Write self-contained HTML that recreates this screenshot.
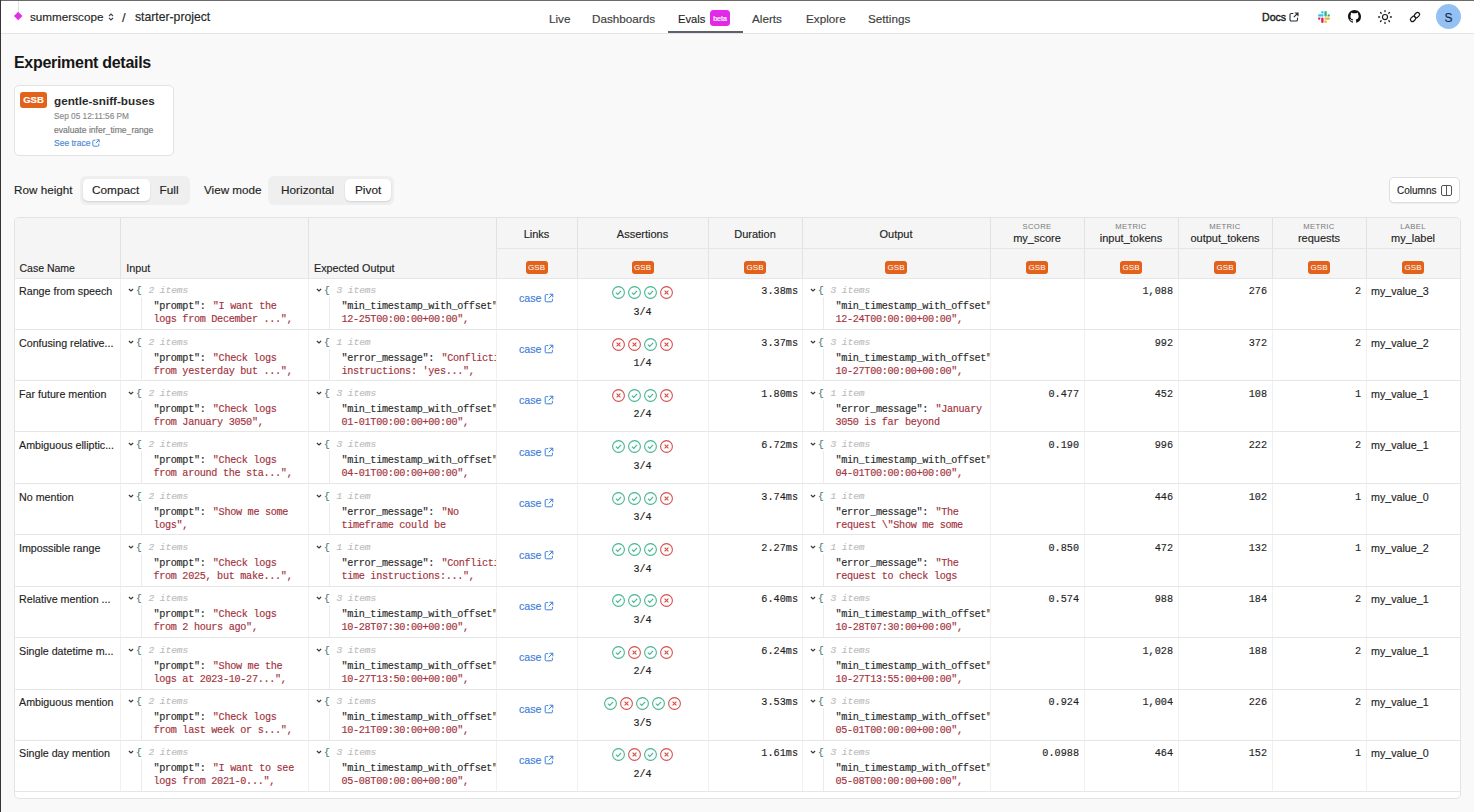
<!DOCTYPE html>
<html><head><meta charset="utf-8"><style>
*{box-sizing:border-box;margin:0;padding:0}
html,body{width:1474px;height:812px;overflow:hidden}
body{background:#f9f9f9;font-family:"Liberation Sans",sans-serif;color:#1f1f1f;position:relative;-webkit-text-stroke:0.15px currentColor}
div{position:absolute}
svg{display:block}
.frameT{left:0;top:0;width:1474px;height:1px;background:#6a6a6a}
.frameL{left:0;top:0;width:1px;height:812px;background:#363636}
.hdr{left:1px;top:1px;width:1473px;height:33px;background:#fff;border-bottom:1px solid #e4e4e4}
.t{white-space:nowrap;line-height:1}
.nav{font-size:11.7px;color:#3d3d3d;top:13px}
.card{left:14px;top:85px;width:160px;height:71px;background:#fff;border:1px solid #e2e2e2;border-radius:5px}
.seg{background:#efefef;border-radius:6px;height:29px;top:176px}
.segb{background:#fff;border-radius:5px;height:22px;top:3px;box-shadow:0 1px 2px rgba(0,0,0,.12)}
.segt{font-size:11.8px;color:#222;top:8.8px;white-space:nowrap;line-height:1}
.tbl{left:14px;top:217px;width:1447px;height:582px;background:#fff;border:1px solid #e3e3e3;border-radius:5px;overflow:hidden}
.thead{left:15px;top:218px;width:1445px;height:60px;background:#f5f5f5;border-radius:4px 4px 0 0}
.vl{width:1px;background:#ececec}
.hl{height:1px;background:#e6e6e6}
.th{font-size:11px;color:#1f1f1f;white-space:nowrap;line-height:1}
.th.c{text-align:center}
.tl{font-size:7.7px;color:#7a7a7a;-webkit-text-stroke:0;text-align:center;letter-spacing:.3px;line-height:1}
.gsb{width:22px;height:12.5px;background:#e2621b;border-radius:3px;color:#fff;font-size:8px;line-height:13.5px;text-align:center;letter-spacing:.1px;-webkit-text-stroke:0}
.td{font-size:10.7px;color:#1f1f1f;white-space:nowrap;line-height:1}
.jc{overflow:hidden;font-family:"Liberation Mono",monospace;font-size:10.2px;letter-spacing:-.32px;line-height:1}
.chev{left:8px;top:10.3px}
.brace{left:16px;top:8px;color:#4a7575;font-size:9.6px;letter-spacing:0}
.cnt{left:28.5px;top:8px;color:#bdbdbd;font-style:italic;font-size:9.6px;letter-spacing:-.1px;white-space:nowrap}
.guide{left:20.5px;top:19px;width:1px;height:32px;background:#ebebeb}
.ln{left:33.4px;white-space:pre;color:#2b2b2b}
.l1{top:24px}
.l2{top:37.3px}
.k{color:#2b2b2b}
.k+.v{margin-left:1.5px}
.v{color:#a3323c}
.lnk{font-size:10.6px;color:#3b7dd8;white-space:nowrap;line-height:1;display:flex;align-items:center;gap:3px}
.asrt{display:flex;justify-content:center;gap:3px}
.asrt svg{display:block}
.frac{text-align:center;font-family:"Liberation Mono",monospace;font-size:10px;color:#222;line-height:1}
.num{text-align:right;font-family:"Liberation Mono",monospace;font-size:10.2px;color:#1f1f1f;line-height:1}
</style></head><body>
<div class="hdr"></div>
<div class="frameT"></div><div class="frameL"></div>
<div style="left:18px;top:1px;width:1px;height:11px;background:#e3e3e3"></div>
<div style="left:15.2px;top:12.8px;width:6.4px;height:6.4px;background:#e22fe6;transform:rotate(45deg)"></div>
<div class="t" style="left:30px;top:11px;font-size:11.7px;color:#262626">summerscope</div>
<div style="left:108px;top:13px"><svg width="6" height="8" viewBox="0 0 6 8"><path d="M1 3 L3 1 L5 3 M1 5 L3 7 L5 5" fill="none" stroke="#444" stroke-width="1.1"/></svg></div>
<div class="t" style="left:122px;top:10.5px;font-size:13px;color:#262626">/</div>
<div class="t" style="left:135px;top:11px;font-size:12.2px;color:#262626">starter-project</div>

<div class="t nav" style="left:549px">Live</div>
<div class="t nav" style="left:592px">Dashboards</div>
<div class="t nav" style="left:678px;color:#1f1f1f;font-size:11.2px;top:13.5px">Evals</div>
<div style="left:710px;top:10px;width:20px;height:16px;background:#e229e8;border-radius:3.5px;color:#fff;font-size:7px;line-height:17.5px;text-align:center;-webkit-text-stroke:.2px #fff">beta</div>
<div style="left:668px;top:31px;width:75px;height:2px;background:#5d616d"></div>
<div class="t nav" style="left:752px">Alerts</div>
<div class="t nav" style="left:806px">Explore</div>
<div class="t nav" style="left:868px">Settings</div>

<div class="t" style="left:1262px;top:12.3px;font-size:10.6px;color:#222;-webkit-text-stroke:.4px #222">Docs</div>
<div style="left:1289px;top:12px"><svg width="10" height="10" viewBox="0 0 10 10"><path d="M4.3 1.5 H2.3 Q1 1.5 1 2.8 V7.7 Q1 9 2.3 9 H7.2 Q8.5 9 8.5 7.7 V5.7" fill="none" stroke="#2a2a2a" stroke-width="1.1"/><path d="M5.8 1 H9 V4.2 M9 1 L4.8 5.2" fill="none" stroke="#2a2a2a" stroke-width="1.1"/></svg></div>
<div style="left:1318px;top:11px"><svg width="12" height="12" viewBox="0 0 54 54">
<path fill="#36C5F0" d="M19.712.133a5.381 5.381 0 0 0-5.376 5.387 5.381 5.381 0 0 0 5.376 5.386h5.376V5.52A5.381 5.381 0 0 0 19.712.133m0 14.365H5.376A5.381 5.381 0 0 0 0 19.884a5.381 5.381 0 0 0 5.376 5.387h14.336a5.381 5.381 0 0 0 5.376-5.387 5.381 5.381 0 0 0-5.376-5.386"/>
<path fill="#2EB67D" d="M53.76 19.884a5.381 5.381 0 0 0-5.376-5.386 5.381 5.381 0 0 0-5.376 5.386v5.387h5.376a5.381 5.381 0 0 0 5.376-5.387m-14.336 0V5.52A5.381 5.381 0 0 0 34.048.133a5.381 5.381 0 0 0-5.376 5.387v14.364a5.381 5.381 0 0 0 5.376 5.387 5.381 5.381 0 0 0 5.376-5.387"/>
<path fill="#ECB22E" d="M34.048 54a5.381 5.381 0 0 0 5.376-5.387 5.381 5.381 0 0 0-5.376-5.386h-5.376v5.386A5.381 5.381 0 0 0 34.048 54m0-14.365h14.336a5.381 5.381 0 0 0 5.376-5.386 5.381 5.381 0 0 0-5.376-5.387H34.048a5.381 5.381 0 0 0-5.376 5.387 5.381 5.381 0 0 0 5.376 5.386"/>
<path fill="#E01E5A" d="M0 34.249a5.381 5.381 0 0 0 5.376 5.386 5.381 5.381 0 0 0 5.376-5.386v-5.387H5.376A5.381 5.381 0 0 0 0 34.25m14.336-.001v14.364A5.381 5.381 0 0 0 19.712 54a5.381 5.381 0 0 0 5.376-5.387V34.25a5.381 5.381 0 0 0-5.376-5.387 5.381 5.381 0 0 0-5.376 5.387"/>
</svg></div>
<div style="left:1348px;top:10px"><svg width="13" height="13" viewBox="0 0 16 16"><path fill="#111" d="M8 0C3.58 0 0 3.58 0 8c0 3.54 2.29 6.53 5.47 7.59.4.07.55-.17.55-.38 0-.19-.01-.82-.01-1.49-2.01.37-2.53-.49-2.69-.94-.09-.23-.48-.94-.82-1.13-.28-.15-.68-.52-.01-.53.63-.01 1.08.58 1.23.82.72 1.21 1.87.87 2.33.66.07-.52.28-.87.51-1.07-1.78-.2-3.64-.89-3.64-3.95 0-.87.31-1.59.82-2.15-.08-.2-.36-1.02.08-2.12 0 0 .67-.21 2.2.82.64-.18 1.32-.27 2-.27.68 0 1.36.09 2 .27 1.53-1.04 2.2-.82 2.2-.82.44 1.1.16 1.92.08 2.12.51.56.82 1.27.82 2.15 0 3.07-1.87 3.75-3.65 3.95.29.25.54.73.54 1.48 0 1.07-.01 1.93-.01 2.2 0 .21.15.46.55.38A8.013 8.013 0 0016 8c0-4.42-3.58-8-8-8z"/></svg></div>
<div style="left:1377px;top:8.8px"><svg width="16" height="16" viewBox="0 0 16 16"><circle cx="8" cy="8" r="2.55" fill="none" stroke="#1d1d1d" stroke-width="1.15"/><g stroke="#1d1d1d" stroke-width="1.3" stroke-linecap="round"><path d="M8 1.6V2.6M8 13.4V14.4M1.6 8H2.6M13.4 8H14.4M3.5 3.5L4.2 4.2M11.8 11.8L12.5 12.5M3.5 12.5L4.2 11.8M11.8 4.2L12.5 3.5"/></g></svg></div>
<div style="left:1408.3px;top:9.8px"><svg width="14" height="14" viewBox="0 0 14 14"><g fill="none" stroke="#1d1d1d" stroke-width="1.25"><rect x="-2.9" y="-2" width="5.8" height="4" rx="2" transform="translate(8.95 5.05) rotate(-45)"/><rect x="-2.9" y="-2" width="5.8" height="4" rx="2" transform="translate(5.05 8.95) rotate(-45)"/></g></svg></div>
<div style="left:1436px;top:4px;width:25px;height:25px;border-radius:50%;background:#93c1f3;color:#1b2b48;font-size:12px;line-height:28px;text-align:center">S</div>

<div class="t" style="left:14px;top:54.5px;font-size:16px;font-weight:bold;color:#161616;letter-spacing:-.3px;-webkit-text-stroke:0">Experiment details</div>

<div class="card">
 <div style="left:5px;top:6px;width:27px;height:16px;background:#e2621b;border-radius:3px;color:#fff;font-size:9.5px;font-weight:bold;line-height:16px;text-align:center">GSB</div>
 <div class="t" style="left:39px;top:9px;font-size:11.7px;font-weight:bold;color:#2a2a2a;-webkit-text-stroke:0">gentle-sniff-buses</div>
 <div class="t" style="left:39px;top:26px;font-size:8.3px;color:#8a8a8a">Sep 05 12:11:56 PM</div>
 <div class="t" style="left:39px;top:39.5px;font-size:8.6px;color:#777">evaluate infer_time_range</div>
 <div class="t" style="left:39px;top:53px;font-size:8.5px;color:#4a87d6;display:flex;gap:2px">See trace <svg width="8" height="8" viewBox="0 0 10 10"><path d="M4.3 1.5 H2.3 Q1 1.5 1 2.8 V7.7 Q1 9 2.3 9 H7.2 Q8.5 9 8.5 7.7 V5.7" fill="none" stroke="#4a87d6" stroke-width="1.2"/><path d="M5.8 1 H9 V4.2 M9 1 L4.8 5.2" fill="none" stroke="#4a87d6" stroke-width="1.2"/></svg></div>
</div>

<div class="t" style="left:14px;top:183.8px;font-size:11.7px;color:#1f1f1f">Row height</div>
<div class="seg" style="left:80px;width:110px">
 <div class="segb" style="left:3px;width:67px"></div>
 <div class="segt" style="left:12px">Compact</div>
 <div class="segt" style="left:79.5px">Full</div>
</div>
<div class="t" style="left:204px;top:183.8px;font-size:11.7px;color:#1f1f1f">View mode</div>
<div class="seg" style="left:268px;width:126px">
 <div class="segb" style="left:77px;width:46px"></div>
 <div class="segt" style="left:13px">Horizontal</div>
 <div class="segt" style="left:87px">Pivot</div>
</div>

<div style="left:1389px;top:177px;width:71px;height:26px;background:#fff;border:1px solid #dedede;border-radius:5px;box-shadow:0 1px 1px rgba(0,0,0,.05)">
 <div class="t" style="left:7px;top:8px;font-size:10px;color:#222">Columns</div>
 <div style="left:51px;top:7px;width:11px;height:11px;border:1px solid #555;border-radius:2px"><div style="left:4px;top:0;width:1px;height:9px;background:#555"></div></div>
</div>

<div class="tbl"></div>
<div class="thead"></div>
<div class="vl" style="left:120px;top:218px;height:60px;background:#e2e2e2"></div>
<div class="vl" style="left:120px;top:279px;height:512px;background:#f1f1f1"></div>
<div class="vl" style="left:308px;top:218px;height:60px;background:#e2e2e2"></div>
<div class="vl" style="left:308px;top:279px;height:512px;background:#f1f1f1"></div>
<div class="vl" style="left:496px;top:218px;height:60px;background:#e2e2e2"></div>
<div class="vl" style="left:496px;top:279px;height:512px;background:#f1f1f1"></div>
<div class="vl" style="left:577px;top:218px;height:60px;background:#e2e2e2"></div>
<div class="vl" style="left:577px;top:279px;height:512px;background:#f1f1f1"></div>
<div class="vl" style="left:708px;top:218px;height:60px;background:#e2e2e2"></div>
<div class="vl" style="left:708px;top:279px;height:512px;background:#f1f1f1"></div>
<div class="vl" style="left:802px;top:218px;height:60px;background:#e2e2e2"></div>
<div class="vl" style="left:802px;top:279px;height:512px;background:#f1f1f1"></div>
<div class="vl" style="left:990px;top:218px;height:60px;background:#e2e2e2"></div>
<div class="vl" style="left:990px;top:279px;height:512px;background:#f1f1f1"></div>
<div class="vl" style="left:1084px;top:218px;height:60px;background:#e2e2e2"></div>
<div class="vl" style="left:1084px;top:279px;height:512px;background:#f1f1f1"></div>
<div class="vl" style="left:1178px;top:218px;height:60px;background:#e2e2e2"></div>
<div class="vl" style="left:1178px;top:279px;height:512px;background:#f1f1f1"></div>
<div class="vl" style="left:1272px;top:218px;height:60px;background:#e2e2e2"></div>
<div class="vl" style="left:1272px;top:279px;height:512px;background:#f1f1f1"></div>
<div class="vl" style="left:1366px;top:218px;height:60px;background:#e2e2e2"></div>
<div class="vl" style="left:1366px;top:279px;height:512px;background:#f1f1f1"></div>
<div class="hl" style="left:496px;top:248px;width:964px"></div>
<div class="hl" style="left:14px;top:278px;width:1447px"></div>
<div class="th" style="left:19.5px;top:263.3px;font-size:10.5px">Case Name</div>
<div class="th" style="left:126.2px;top:263.3px;font-size:10.8px">Input</div>
<div class="th" style="left:314px;top:263.3px;font-size:10.8px">Expected Output</div>
<div class="th c" style="left:496px;top:229px;width:81px">Links</div>
<div class="th c" style="left:577px;top:229px;width:131px">Assertions</div>
<div class="th c" style="left:708px;top:229px;width:94px">Duration</div>
<div class="th c" style="left:802px;top:229px;width:188px">Output</div>
<div class="tl" style="left:990px;top:223px;width:94px">SCORE</div>
<div class="th c" style="left:990px;top:232.5px;width:94px">my_score</div>
<div class="tl" style="left:1084px;top:223px;width:94px">METRIC</div>
<div class="th c" style="left:1084px;top:232.5px;width:94px">input_tokens</div>
<div class="tl" style="left:1178px;top:223px;width:94px">METRIC</div>
<div class="th c" style="left:1178px;top:232.5px;width:94px">output_tokens</div>
<div class="tl" style="left:1272px;top:223px;width:94px">METRIC</div>
<div class="th c" style="left:1272px;top:232.5px;width:94px">requests</div>
<div class="tl" style="left:1366px;top:223px;width:94px">LABEL</div>
<div class="th c" style="left:1366px;top:232.5px;width:94px">my_label</div>
<div class="gsb" style="left:525.5px;top:261px">GSB</div>
<div class="gsb" style="left:631.5px;top:261px">GSB</div>
<div class="gsb" style="left:744.0px;top:261px">GSB</div>
<div class="gsb" style="left:885.0px;top:261px">GSB</div>
<div class="gsb" style="left:1026.0px;top:261px">GSB</div>
<div class="gsb" style="left:1120.0px;top:261px">GSB</div>
<div class="gsb" style="left:1214.0px;top:261px">GSB</div>
<div class="gsb" style="left:1308.0px;top:261px">GSB</div>
<div class="gsb" style="left:1402.0px;top:261px">GSB</div>
<div class="hl" style="left:14px;top:329px;width:1446px"></div>
<div class="td" style="left:19px;top:286.2px">Range from speech</div>
<div class="jc" style="left:120px;top:278.0px;width:188px;height:51px"><div class="chev"><svg width="6" height="4" viewBox="0 0 6 4"><path d="M0.9 1 L3 3 L5.1 1" fill="none" stroke="#3a3a3a" stroke-width="1.2"/></svg></div><div class="brace">{</div><div class="cnt">2 items</div><div class="guide"></div><div class="ln l1"><span class="k">"prompt": </span><span class="v">"I want the</span></div><div class="ln l2"><span class="v">logs from December ...",</span></div></div>
<div class="jc" style="left:308px;top:278.0px;width:188px;height:51px"><div class="chev"><svg width="6" height="4" viewBox="0 0 6 4"><path d="M0.9 1 L3 3 L5.1 1" fill="none" stroke="#3a3a3a" stroke-width="1.2"/></svg></div><div class="brace">{</div><div class="cnt">3 items</div><div class="guide"></div><div class="ln l1"><span class="k">"min_timestamp_with_offset"</span></div><div class="ln l2"><span class="v">12-25T00:00:00+00:00",</span></div></div>
<div class="jc" style="left:802px;top:278.0px;width:188px;height:51px"><div class="chev"><svg width="6" height="4" viewBox="0 0 6 4"><path d="M0.9 1 L3 3 L5.1 1" fill="none" stroke="#3a3a3a" stroke-width="1.2"/></svg></div><div class="brace">{</div><div class="cnt">3 items</div><div class="guide"></div><div class="ln l1"><span class="k">"min_timestamp_with_offset"</span></div><div class="ln l2"><span class="v">12-24T00:00:00+00:00",</span></div></div>
<div class="lnk" style="left:519px;top:292.5px">case<svg width="10" height="10" viewBox="0 0 10 10"><path d="M4.2 1.6 H2.2 Q1.2 1.6 1.2 2.6 V7.8 Q1.2 8.8 2.2 8.8 H7.4 Q8.4 8.8 8.4 7.8 V5.8" fill="none" stroke="#3b7dd8" stroke-width="1"/><path d="M5.6 1.2 H8.8 V4.4 M8.8 1.2 L4.6 5.4" fill="none" stroke="#3b7dd8" stroke-width="1"/></svg></div>
<div class="asrt" style="left:577px;top:286.0px;width:131px"><svg width="13" height="13" viewBox="0 0 13 13"><circle cx="6.5" cy="6.5" r="5.9" fill="none" stroke="#45b690" stroke-width="1.1"/><path d="M3.9 6.7 L5.7 8.4 L9.1 4.8" fill="none" stroke="#45b690" stroke-width="1.15"/></svg><svg width="13" height="13" viewBox="0 0 13 13"><circle cx="6.5" cy="6.5" r="5.9" fill="none" stroke="#45b690" stroke-width="1.1"/><path d="M3.9 6.7 L5.7 8.4 L9.1 4.8" fill="none" stroke="#45b690" stroke-width="1.15"/></svg><svg width="13" height="13" viewBox="0 0 13 13"><circle cx="6.5" cy="6.5" r="5.9" fill="none" stroke="#45b690" stroke-width="1.1"/><path d="M3.9 6.7 L5.7 8.4 L9.1 4.8" fill="none" stroke="#45b690" stroke-width="1.15"/></svg><svg width="13" height="13" viewBox="0 0 13 13"><circle cx="6.5" cy="6.5" r="5.9" fill="none" stroke="#d6504c" stroke-width="1.1"/><path d="M4.6 4.6 L8.4 8.4 M8.4 4.6 L4.6 8.4" fill="none" stroke="#d6504c" stroke-width="1.15"/></svg></div>
<div class="frac" style="left:577px;top:307.5px;width:131px">3/4</div>
<div class="num" style="left:708px;top:287.0px;width:90px">3.38ms</div>
<div class="num" style="left:990px;top:287.0px;width:89px"></div>
<div class="num" style="left:1084px;top:287.0px;width:89px">1,088</div>
<div class="num" style="left:1178px;top:287.0px;width:89px">276</div>
<div class="num" style="left:1272px;top:287.0px;width:89px">2</div>
<div class="td" style="left:1371px;top:286.0px">my_value_3</div>
<div class="hl" style="left:14px;top:380px;width:1446px"></div>
<div class="td" style="left:19px;top:337.7px">Confusing relative...</div>
<div class="jc" style="left:120px;top:329.5px;width:188px;height:51px"><div class="chev"><svg width="6" height="4" viewBox="0 0 6 4"><path d="M0.9 1 L3 3 L5.1 1" fill="none" stroke="#3a3a3a" stroke-width="1.2"/></svg></div><div class="brace">{</div><div class="cnt">2 items</div><div class="guide"></div><div class="ln l1"><span class="k">"prompt": </span><span class="v">"Check logs</span></div><div class="ln l2"><span class="v">from yesterday but ...",</span></div></div>
<div class="jc" style="left:308px;top:329.5px;width:188px;height:51px"><div class="chev"><svg width="6" height="4" viewBox="0 0 6 4"><path d="M0.9 1 L3 3 L5.1 1" fill="none" stroke="#3a3a3a" stroke-width="1.2"/></svg></div><div class="brace">{</div><div class="cnt">1 item</div><div class="guide"></div><div class="ln l1"><span class="k">"error_message": </span><span class="v">"Conflicting</span></div><div class="ln l2"><span class="v">instructions: 'yes...",</span></div></div>
<div class="jc" style="left:802px;top:329.5px;width:188px;height:51px"><div class="chev"><svg width="6" height="4" viewBox="0 0 6 4"><path d="M0.9 1 L3 3 L5.1 1" fill="none" stroke="#3a3a3a" stroke-width="1.2"/></svg></div><div class="brace">{</div><div class="cnt">3 items</div><div class="guide"></div><div class="ln l1"><span class="k">"min_timestamp_with_offset"</span></div><div class="ln l2"><span class="v">10-27T00:00:00+00:00",</span></div></div>
<div class="lnk" style="left:519px;top:344.0px">case<svg width="10" height="10" viewBox="0 0 10 10"><path d="M4.2 1.6 H2.2 Q1.2 1.6 1.2 2.6 V7.8 Q1.2 8.8 2.2 8.8 H7.4 Q8.4 8.8 8.4 7.8 V5.8" fill="none" stroke="#3b7dd8" stroke-width="1"/><path d="M5.6 1.2 H8.8 V4.4 M8.8 1.2 L4.6 5.4" fill="none" stroke="#3b7dd8" stroke-width="1"/></svg></div>
<div class="asrt" style="left:577px;top:337.5px;width:131px"><svg width="13" height="13" viewBox="0 0 13 13"><circle cx="6.5" cy="6.5" r="5.9" fill="none" stroke="#d6504c" stroke-width="1.1"/><path d="M4.6 4.6 L8.4 8.4 M8.4 4.6 L4.6 8.4" fill="none" stroke="#d6504c" stroke-width="1.15"/></svg><svg width="13" height="13" viewBox="0 0 13 13"><circle cx="6.5" cy="6.5" r="5.9" fill="none" stroke="#d6504c" stroke-width="1.1"/><path d="M4.6 4.6 L8.4 8.4 M8.4 4.6 L4.6 8.4" fill="none" stroke="#d6504c" stroke-width="1.15"/></svg><svg width="13" height="13" viewBox="0 0 13 13"><circle cx="6.5" cy="6.5" r="5.9" fill="none" stroke="#45b690" stroke-width="1.1"/><path d="M3.9 6.7 L5.7 8.4 L9.1 4.8" fill="none" stroke="#45b690" stroke-width="1.15"/></svg><svg width="13" height="13" viewBox="0 0 13 13"><circle cx="6.5" cy="6.5" r="5.9" fill="none" stroke="#d6504c" stroke-width="1.1"/><path d="M4.6 4.6 L8.4 8.4 M8.4 4.6 L4.6 8.4" fill="none" stroke="#d6504c" stroke-width="1.15"/></svg></div>
<div class="frac" style="left:577px;top:359.0px;width:131px">1/4</div>
<div class="num" style="left:708px;top:338.5px;width:90px">3.37ms</div>
<div class="num" style="left:990px;top:338.5px;width:89px"></div>
<div class="num" style="left:1084px;top:338.5px;width:89px">992</div>
<div class="num" style="left:1178px;top:338.5px;width:89px">372</div>
<div class="num" style="left:1272px;top:338.5px;width:89px">2</div>
<div class="td" style="left:1371px;top:337.5px">my_value_2</div>
<div class="hl" style="left:14px;top:431px;width:1446px"></div>
<div class="td" style="left:19px;top:388.7px">Far future mention</div>
<div class="jc" style="left:120px;top:380.5px;width:188px;height:51px"><div class="chev"><svg width="6" height="4" viewBox="0 0 6 4"><path d="M0.9 1 L3 3 L5.1 1" fill="none" stroke="#3a3a3a" stroke-width="1.2"/></svg></div><div class="brace">{</div><div class="cnt">2 items</div><div class="guide"></div><div class="ln l1"><span class="k">"prompt": </span><span class="v">"Check logs</span></div><div class="ln l2"><span class="v">from January 3050",</span></div></div>
<div class="jc" style="left:308px;top:380.5px;width:188px;height:51px"><div class="chev"><svg width="6" height="4" viewBox="0 0 6 4"><path d="M0.9 1 L3 3 L5.1 1" fill="none" stroke="#3a3a3a" stroke-width="1.2"/></svg></div><div class="brace">{</div><div class="cnt">3 items</div><div class="guide"></div><div class="ln l1"><span class="k">"min_timestamp_with_offset"</span></div><div class="ln l2"><span class="v">01-01T00:00:00+00:00",</span></div></div>
<div class="jc" style="left:802px;top:380.5px;width:188px;height:51px"><div class="chev"><svg width="6" height="4" viewBox="0 0 6 4"><path d="M0.9 1 L3 3 L5.1 1" fill="none" stroke="#3a3a3a" stroke-width="1.2"/></svg></div><div class="brace">{</div><div class="cnt">1 item</div><div class="guide"></div><div class="ln l1"><span class="k">"error_message": </span><span class="v">"January</span></div><div class="ln l2"><span class="v">3050 is far beyond</span></div></div>
<div class="lnk" style="left:519px;top:395.0px">case<svg width="10" height="10" viewBox="0 0 10 10"><path d="M4.2 1.6 H2.2 Q1.2 1.6 1.2 2.6 V7.8 Q1.2 8.8 2.2 8.8 H7.4 Q8.4 8.8 8.4 7.8 V5.8" fill="none" stroke="#3b7dd8" stroke-width="1"/><path d="M5.6 1.2 H8.8 V4.4 M8.8 1.2 L4.6 5.4" fill="none" stroke="#3b7dd8" stroke-width="1"/></svg></div>
<div class="asrt" style="left:577px;top:388.5px;width:131px"><svg width="13" height="13" viewBox="0 0 13 13"><circle cx="6.5" cy="6.5" r="5.9" fill="none" stroke="#d6504c" stroke-width="1.1"/><path d="M4.6 4.6 L8.4 8.4 M8.4 4.6 L4.6 8.4" fill="none" stroke="#d6504c" stroke-width="1.15"/></svg><svg width="13" height="13" viewBox="0 0 13 13"><circle cx="6.5" cy="6.5" r="5.9" fill="none" stroke="#45b690" stroke-width="1.1"/><path d="M3.9 6.7 L5.7 8.4 L9.1 4.8" fill="none" stroke="#45b690" stroke-width="1.15"/></svg><svg width="13" height="13" viewBox="0 0 13 13"><circle cx="6.5" cy="6.5" r="5.9" fill="none" stroke="#45b690" stroke-width="1.1"/><path d="M3.9 6.7 L5.7 8.4 L9.1 4.8" fill="none" stroke="#45b690" stroke-width="1.15"/></svg><svg width="13" height="13" viewBox="0 0 13 13"><circle cx="6.5" cy="6.5" r="5.9" fill="none" stroke="#d6504c" stroke-width="1.1"/><path d="M4.6 4.6 L8.4 8.4 M8.4 4.6 L4.6 8.4" fill="none" stroke="#d6504c" stroke-width="1.15"/></svg></div>
<div class="frac" style="left:577px;top:410.0px;width:131px">2/4</div>
<div class="num" style="left:708px;top:389.5px;width:90px">1.80ms</div>
<div class="num" style="left:990px;top:389.5px;width:89px">0.477</div>
<div class="num" style="left:1084px;top:389.5px;width:89px">452</div>
<div class="num" style="left:1178px;top:389.5px;width:89px">108</div>
<div class="num" style="left:1272px;top:389.5px;width:89px">1</div>
<div class="td" style="left:1371px;top:388.5px">my_value_1</div>
<div class="hl" style="left:14px;top:483px;width:1446px"></div>
<div class="td" style="left:19px;top:440.2px">Ambiguous elliptic...</div>
<div class="jc" style="left:120px;top:432.0px;width:188px;height:51px"><div class="chev"><svg width="6" height="4" viewBox="0 0 6 4"><path d="M0.9 1 L3 3 L5.1 1" fill="none" stroke="#3a3a3a" stroke-width="1.2"/></svg></div><div class="brace">{</div><div class="cnt">2 items</div><div class="guide"></div><div class="ln l1"><span class="k">"prompt": </span><span class="v">"Check logs</span></div><div class="ln l2"><span class="v">from around the sta...",</span></div></div>
<div class="jc" style="left:308px;top:432.0px;width:188px;height:51px"><div class="chev"><svg width="6" height="4" viewBox="0 0 6 4"><path d="M0.9 1 L3 3 L5.1 1" fill="none" stroke="#3a3a3a" stroke-width="1.2"/></svg></div><div class="brace">{</div><div class="cnt">3 items</div><div class="guide"></div><div class="ln l1"><span class="k">"min_timestamp_with_offset"</span></div><div class="ln l2"><span class="v">04-01T00:00:00+00:00",</span></div></div>
<div class="jc" style="left:802px;top:432.0px;width:188px;height:51px"><div class="chev"><svg width="6" height="4" viewBox="0 0 6 4"><path d="M0.9 1 L3 3 L5.1 1" fill="none" stroke="#3a3a3a" stroke-width="1.2"/></svg></div><div class="brace">{</div><div class="cnt">3 items</div><div class="guide"></div><div class="ln l1"><span class="k">"min_timestamp_with_offset"</span></div><div class="ln l2"><span class="v">04-01T00:00:00+00:00",</span></div></div>
<div class="lnk" style="left:519px;top:446.5px">case<svg width="10" height="10" viewBox="0 0 10 10"><path d="M4.2 1.6 H2.2 Q1.2 1.6 1.2 2.6 V7.8 Q1.2 8.8 2.2 8.8 H7.4 Q8.4 8.8 8.4 7.8 V5.8" fill="none" stroke="#3b7dd8" stroke-width="1"/><path d="M5.6 1.2 H8.8 V4.4 M8.8 1.2 L4.6 5.4" fill="none" stroke="#3b7dd8" stroke-width="1"/></svg></div>
<div class="asrt" style="left:577px;top:440.0px;width:131px"><svg width="13" height="13" viewBox="0 0 13 13"><circle cx="6.5" cy="6.5" r="5.9" fill="none" stroke="#45b690" stroke-width="1.1"/><path d="M3.9 6.7 L5.7 8.4 L9.1 4.8" fill="none" stroke="#45b690" stroke-width="1.15"/></svg><svg width="13" height="13" viewBox="0 0 13 13"><circle cx="6.5" cy="6.5" r="5.9" fill="none" stroke="#45b690" stroke-width="1.1"/><path d="M3.9 6.7 L5.7 8.4 L9.1 4.8" fill="none" stroke="#45b690" stroke-width="1.15"/></svg><svg width="13" height="13" viewBox="0 0 13 13"><circle cx="6.5" cy="6.5" r="5.9" fill="none" stroke="#45b690" stroke-width="1.1"/><path d="M3.9 6.7 L5.7 8.4 L9.1 4.8" fill="none" stroke="#45b690" stroke-width="1.15"/></svg><svg width="13" height="13" viewBox="0 0 13 13"><circle cx="6.5" cy="6.5" r="5.9" fill="none" stroke="#d6504c" stroke-width="1.1"/><path d="M4.6 4.6 L8.4 8.4 M8.4 4.6 L4.6 8.4" fill="none" stroke="#d6504c" stroke-width="1.15"/></svg></div>
<div class="frac" style="left:577px;top:461.5px;width:131px">3/4</div>
<div class="num" style="left:708px;top:441.0px;width:90px">6.72ms</div>
<div class="num" style="left:990px;top:441.0px;width:89px">0.190</div>
<div class="num" style="left:1084px;top:441.0px;width:89px">996</div>
<div class="num" style="left:1178px;top:441.0px;width:89px">222</div>
<div class="num" style="left:1272px;top:441.0px;width:89px">2</div>
<div class="td" style="left:1371px;top:440.0px">my_value_1</div>
<div class="hl" style="left:14px;top:534px;width:1446px"></div>
<div class="td" style="left:19px;top:491.7px">No mention</div>
<div class="jc" style="left:120px;top:483.5px;width:188px;height:51px"><div class="chev"><svg width="6" height="4" viewBox="0 0 6 4"><path d="M0.9 1 L3 3 L5.1 1" fill="none" stroke="#3a3a3a" stroke-width="1.2"/></svg></div><div class="brace">{</div><div class="cnt">2 items</div><div class="guide"></div><div class="ln l1"><span class="k">"prompt": </span><span class="v">"Show me some</span></div><div class="ln l2"><span class="v">logs",</span></div></div>
<div class="jc" style="left:308px;top:483.5px;width:188px;height:51px"><div class="chev"><svg width="6" height="4" viewBox="0 0 6 4"><path d="M0.9 1 L3 3 L5.1 1" fill="none" stroke="#3a3a3a" stroke-width="1.2"/></svg></div><div class="brace">{</div><div class="cnt">1 item</div><div class="guide"></div><div class="ln l1"><span class="k">"error_message": </span><span class="v">"No</span></div><div class="ln l2"><span class="v">timeframe could be</span></div></div>
<div class="jc" style="left:802px;top:483.5px;width:188px;height:51px"><div class="chev"><svg width="6" height="4" viewBox="0 0 6 4"><path d="M0.9 1 L3 3 L5.1 1" fill="none" stroke="#3a3a3a" stroke-width="1.2"/></svg></div><div class="brace">{</div><div class="cnt">1 item</div><div class="guide"></div><div class="ln l1"><span class="k">"error_message": </span><span class="v">"The</span></div><div class="ln l2"><span class="v">request \"Show me some</span></div></div>
<div class="lnk" style="left:519px;top:498.0px">case<svg width="10" height="10" viewBox="0 0 10 10"><path d="M4.2 1.6 H2.2 Q1.2 1.6 1.2 2.6 V7.8 Q1.2 8.8 2.2 8.8 H7.4 Q8.4 8.8 8.4 7.8 V5.8" fill="none" stroke="#3b7dd8" stroke-width="1"/><path d="M5.6 1.2 H8.8 V4.4 M8.8 1.2 L4.6 5.4" fill="none" stroke="#3b7dd8" stroke-width="1"/></svg></div>
<div class="asrt" style="left:577px;top:491.5px;width:131px"><svg width="13" height="13" viewBox="0 0 13 13"><circle cx="6.5" cy="6.5" r="5.9" fill="none" stroke="#45b690" stroke-width="1.1"/><path d="M3.9 6.7 L5.7 8.4 L9.1 4.8" fill="none" stroke="#45b690" stroke-width="1.15"/></svg><svg width="13" height="13" viewBox="0 0 13 13"><circle cx="6.5" cy="6.5" r="5.9" fill="none" stroke="#45b690" stroke-width="1.1"/><path d="M3.9 6.7 L5.7 8.4 L9.1 4.8" fill="none" stroke="#45b690" stroke-width="1.15"/></svg><svg width="13" height="13" viewBox="0 0 13 13"><circle cx="6.5" cy="6.5" r="5.9" fill="none" stroke="#45b690" stroke-width="1.1"/><path d="M3.9 6.7 L5.7 8.4 L9.1 4.8" fill="none" stroke="#45b690" stroke-width="1.15"/></svg><svg width="13" height="13" viewBox="0 0 13 13"><circle cx="6.5" cy="6.5" r="5.9" fill="none" stroke="#d6504c" stroke-width="1.1"/><path d="M4.6 4.6 L8.4 8.4 M8.4 4.6 L4.6 8.4" fill="none" stroke="#d6504c" stroke-width="1.15"/></svg></div>
<div class="frac" style="left:577px;top:513.0px;width:131px">3/4</div>
<div class="num" style="left:708px;top:492.5px;width:90px">3.74ms</div>
<div class="num" style="left:990px;top:492.5px;width:89px"></div>
<div class="num" style="left:1084px;top:492.5px;width:89px">446</div>
<div class="num" style="left:1178px;top:492.5px;width:89px">102</div>
<div class="num" style="left:1272px;top:492.5px;width:89px">1</div>
<div class="td" style="left:1371px;top:491.5px">my_value_0</div>
<div class="hl" style="left:14px;top:586px;width:1446px"></div>
<div class="td" style="left:19px;top:543.2px">Impossible range</div>
<div class="jc" style="left:120px;top:535.0px;width:188px;height:51px"><div class="chev"><svg width="6" height="4" viewBox="0 0 6 4"><path d="M0.9 1 L3 3 L5.1 1" fill="none" stroke="#3a3a3a" stroke-width="1.2"/></svg></div><div class="brace">{</div><div class="cnt">2 items</div><div class="guide"></div><div class="ln l1"><span class="k">"prompt": </span><span class="v">"Check logs</span></div><div class="ln l2"><span class="v">from 2025, but make...",</span></div></div>
<div class="jc" style="left:308px;top:535.0px;width:188px;height:51px"><div class="chev"><svg width="6" height="4" viewBox="0 0 6 4"><path d="M0.9 1 L3 3 L5.1 1" fill="none" stroke="#3a3a3a" stroke-width="1.2"/></svg></div><div class="brace">{</div><div class="cnt">1 item</div><div class="guide"></div><div class="ln l1"><span class="k">"error_message": </span><span class="v">"Conflicting</span></div><div class="ln l2"><span class="v">time instructions:...",</span></div></div>
<div class="jc" style="left:802px;top:535.0px;width:188px;height:51px"><div class="chev"><svg width="6" height="4" viewBox="0 0 6 4"><path d="M0.9 1 L3 3 L5.1 1" fill="none" stroke="#3a3a3a" stroke-width="1.2"/></svg></div><div class="brace">{</div><div class="cnt">1 item</div><div class="guide"></div><div class="ln l1"><span class="k">"error_message": </span><span class="v">"The</span></div><div class="ln l2"><span class="v">request to check logs</span></div></div>
<div class="lnk" style="left:519px;top:549.5px">case<svg width="10" height="10" viewBox="0 0 10 10"><path d="M4.2 1.6 H2.2 Q1.2 1.6 1.2 2.6 V7.8 Q1.2 8.8 2.2 8.8 H7.4 Q8.4 8.8 8.4 7.8 V5.8" fill="none" stroke="#3b7dd8" stroke-width="1"/><path d="M5.6 1.2 H8.8 V4.4 M8.8 1.2 L4.6 5.4" fill="none" stroke="#3b7dd8" stroke-width="1"/></svg></div>
<div class="asrt" style="left:577px;top:543.0px;width:131px"><svg width="13" height="13" viewBox="0 0 13 13"><circle cx="6.5" cy="6.5" r="5.9" fill="none" stroke="#45b690" stroke-width="1.1"/><path d="M3.9 6.7 L5.7 8.4 L9.1 4.8" fill="none" stroke="#45b690" stroke-width="1.15"/></svg><svg width="13" height="13" viewBox="0 0 13 13"><circle cx="6.5" cy="6.5" r="5.9" fill="none" stroke="#45b690" stroke-width="1.1"/><path d="M3.9 6.7 L5.7 8.4 L9.1 4.8" fill="none" stroke="#45b690" stroke-width="1.15"/></svg><svg width="13" height="13" viewBox="0 0 13 13"><circle cx="6.5" cy="6.5" r="5.9" fill="none" stroke="#45b690" stroke-width="1.1"/><path d="M3.9 6.7 L5.7 8.4 L9.1 4.8" fill="none" stroke="#45b690" stroke-width="1.15"/></svg><svg width="13" height="13" viewBox="0 0 13 13"><circle cx="6.5" cy="6.5" r="5.9" fill="none" stroke="#d6504c" stroke-width="1.1"/><path d="M4.6 4.6 L8.4 8.4 M8.4 4.6 L4.6 8.4" fill="none" stroke="#d6504c" stroke-width="1.15"/></svg></div>
<div class="frac" style="left:577px;top:564.5px;width:131px">3/4</div>
<div class="num" style="left:708px;top:544.0px;width:90px">2.27ms</div>
<div class="num" style="left:990px;top:544.0px;width:89px">0.850</div>
<div class="num" style="left:1084px;top:544.0px;width:89px">472</div>
<div class="num" style="left:1178px;top:544.0px;width:89px">132</div>
<div class="num" style="left:1272px;top:544.0px;width:89px">1</div>
<div class="td" style="left:1371px;top:543.0px">my_value_2</div>
<div class="hl" style="left:14px;top:637px;width:1446px"></div>
<div class="td" style="left:19px;top:594.2px">Relative mention ...</div>
<div class="jc" style="left:120px;top:586.0px;width:188px;height:51px"><div class="chev"><svg width="6" height="4" viewBox="0 0 6 4"><path d="M0.9 1 L3 3 L5.1 1" fill="none" stroke="#3a3a3a" stroke-width="1.2"/></svg></div><div class="brace">{</div><div class="cnt">2 items</div><div class="guide"></div><div class="ln l1"><span class="k">"prompt": </span><span class="v">"Check logs</span></div><div class="ln l2"><span class="v">from 2 hours ago",</span></div></div>
<div class="jc" style="left:308px;top:586.0px;width:188px;height:51px"><div class="chev"><svg width="6" height="4" viewBox="0 0 6 4"><path d="M0.9 1 L3 3 L5.1 1" fill="none" stroke="#3a3a3a" stroke-width="1.2"/></svg></div><div class="brace">{</div><div class="cnt">3 items</div><div class="guide"></div><div class="ln l1"><span class="k">"min_timestamp_with_offset"</span></div><div class="ln l2"><span class="v">10-28T07:30:00+00:00",</span></div></div>
<div class="jc" style="left:802px;top:586.0px;width:188px;height:51px"><div class="chev"><svg width="6" height="4" viewBox="0 0 6 4"><path d="M0.9 1 L3 3 L5.1 1" fill="none" stroke="#3a3a3a" stroke-width="1.2"/></svg></div><div class="brace">{</div><div class="cnt">3 items</div><div class="guide"></div><div class="ln l1"><span class="k">"min_timestamp_with_offset"</span></div><div class="ln l2"><span class="v">10-28T07:30:00+00:00",</span></div></div>
<div class="lnk" style="left:519px;top:600.5px">case<svg width="10" height="10" viewBox="0 0 10 10"><path d="M4.2 1.6 H2.2 Q1.2 1.6 1.2 2.6 V7.8 Q1.2 8.8 2.2 8.8 H7.4 Q8.4 8.8 8.4 7.8 V5.8" fill="none" stroke="#3b7dd8" stroke-width="1"/><path d="M5.6 1.2 H8.8 V4.4 M8.8 1.2 L4.6 5.4" fill="none" stroke="#3b7dd8" stroke-width="1"/></svg></div>
<div class="asrt" style="left:577px;top:594.0px;width:131px"><svg width="13" height="13" viewBox="0 0 13 13"><circle cx="6.5" cy="6.5" r="5.9" fill="none" stroke="#45b690" stroke-width="1.1"/><path d="M3.9 6.7 L5.7 8.4 L9.1 4.8" fill="none" stroke="#45b690" stroke-width="1.15"/></svg><svg width="13" height="13" viewBox="0 0 13 13"><circle cx="6.5" cy="6.5" r="5.9" fill="none" stroke="#45b690" stroke-width="1.1"/><path d="M3.9 6.7 L5.7 8.4 L9.1 4.8" fill="none" stroke="#45b690" stroke-width="1.15"/></svg><svg width="13" height="13" viewBox="0 0 13 13"><circle cx="6.5" cy="6.5" r="5.9" fill="none" stroke="#45b690" stroke-width="1.1"/><path d="M3.9 6.7 L5.7 8.4 L9.1 4.8" fill="none" stroke="#45b690" stroke-width="1.15"/></svg><svg width="13" height="13" viewBox="0 0 13 13"><circle cx="6.5" cy="6.5" r="5.9" fill="none" stroke="#d6504c" stroke-width="1.1"/><path d="M4.6 4.6 L8.4 8.4 M8.4 4.6 L4.6 8.4" fill="none" stroke="#d6504c" stroke-width="1.15"/></svg></div>
<div class="frac" style="left:577px;top:615.5px;width:131px">3/4</div>
<div class="num" style="left:708px;top:595.0px;width:90px">6.40ms</div>
<div class="num" style="left:990px;top:595.0px;width:89px">0.574</div>
<div class="num" style="left:1084px;top:595.0px;width:89px">988</div>
<div class="num" style="left:1178px;top:595.0px;width:89px">184</div>
<div class="num" style="left:1272px;top:595.0px;width:89px">2</div>
<div class="td" style="left:1371px;top:594.0px">my_value_1</div>
<div class="hl" style="left:14px;top:689px;width:1446px"></div>
<div class="td" style="left:19px;top:645.7px">Single datetime m...</div>
<div class="jc" style="left:120px;top:637.5px;width:188px;height:51px"><div class="chev"><svg width="6" height="4" viewBox="0 0 6 4"><path d="M0.9 1 L3 3 L5.1 1" fill="none" stroke="#3a3a3a" stroke-width="1.2"/></svg></div><div class="brace">{</div><div class="cnt">2 items</div><div class="guide"></div><div class="ln l1"><span class="k">"prompt": </span><span class="v">"Show me the</span></div><div class="ln l2"><span class="v">logs at 2023-10-27...",</span></div></div>
<div class="jc" style="left:308px;top:637.5px;width:188px;height:51px"><div class="chev"><svg width="6" height="4" viewBox="0 0 6 4"><path d="M0.9 1 L3 3 L5.1 1" fill="none" stroke="#3a3a3a" stroke-width="1.2"/></svg></div><div class="brace">{</div><div class="cnt">3 items</div><div class="guide"></div><div class="ln l1"><span class="k">"min_timestamp_with_offset"</span></div><div class="ln l2"><span class="v">10-27T13:50:00+00:00",</span></div></div>
<div class="jc" style="left:802px;top:637.5px;width:188px;height:51px"><div class="chev"><svg width="6" height="4" viewBox="0 0 6 4"><path d="M0.9 1 L3 3 L5.1 1" fill="none" stroke="#3a3a3a" stroke-width="1.2"/></svg></div><div class="brace">{</div><div class="cnt">3 items</div><div class="guide"></div><div class="ln l1"><span class="k">"min_timestamp_with_offset"</span></div><div class="ln l2"><span class="v">10-27T13:55:00+00:00",</span></div></div>
<div class="lnk" style="left:519px;top:652.0px">case<svg width="10" height="10" viewBox="0 0 10 10"><path d="M4.2 1.6 H2.2 Q1.2 1.6 1.2 2.6 V7.8 Q1.2 8.8 2.2 8.8 H7.4 Q8.4 8.8 8.4 7.8 V5.8" fill="none" stroke="#3b7dd8" stroke-width="1"/><path d="M5.6 1.2 H8.8 V4.4 M8.8 1.2 L4.6 5.4" fill="none" stroke="#3b7dd8" stroke-width="1"/></svg></div>
<div class="asrt" style="left:577px;top:645.5px;width:131px"><svg width="13" height="13" viewBox="0 0 13 13"><circle cx="6.5" cy="6.5" r="5.9" fill="none" stroke="#45b690" stroke-width="1.1"/><path d="M3.9 6.7 L5.7 8.4 L9.1 4.8" fill="none" stroke="#45b690" stroke-width="1.15"/></svg><svg width="13" height="13" viewBox="0 0 13 13"><circle cx="6.5" cy="6.5" r="5.9" fill="none" stroke="#d6504c" stroke-width="1.1"/><path d="M4.6 4.6 L8.4 8.4 M8.4 4.6 L4.6 8.4" fill="none" stroke="#d6504c" stroke-width="1.15"/></svg><svg width="13" height="13" viewBox="0 0 13 13"><circle cx="6.5" cy="6.5" r="5.9" fill="none" stroke="#45b690" stroke-width="1.1"/><path d="M3.9 6.7 L5.7 8.4 L9.1 4.8" fill="none" stroke="#45b690" stroke-width="1.15"/></svg><svg width="13" height="13" viewBox="0 0 13 13"><circle cx="6.5" cy="6.5" r="5.9" fill="none" stroke="#d6504c" stroke-width="1.1"/><path d="M4.6 4.6 L8.4 8.4 M8.4 4.6 L4.6 8.4" fill="none" stroke="#d6504c" stroke-width="1.15"/></svg></div>
<div class="frac" style="left:577px;top:667.0px;width:131px">2/4</div>
<div class="num" style="left:708px;top:646.5px;width:90px">6.24ms</div>
<div class="num" style="left:990px;top:646.5px;width:89px"></div>
<div class="num" style="left:1084px;top:646.5px;width:89px">1,028</div>
<div class="num" style="left:1178px;top:646.5px;width:89px">188</div>
<div class="num" style="left:1272px;top:646.5px;width:89px">2</div>
<div class="td" style="left:1371px;top:645.5px">my_value_1</div>
<div class="hl" style="left:14px;top:740px;width:1446px"></div>
<div class="td" style="left:19px;top:697.2px">Ambiguous mention</div>
<div class="jc" style="left:120px;top:689.0px;width:188px;height:51px"><div class="chev"><svg width="6" height="4" viewBox="0 0 6 4"><path d="M0.9 1 L3 3 L5.1 1" fill="none" stroke="#3a3a3a" stroke-width="1.2"/></svg></div><div class="brace">{</div><div class="cnt">2 items</div><div class="guide"></div><div class="ln l1"><span class="k">"prompt": </span><span class="v">"Check logs</span></div><div class="ln l2"><span class="v">from last week or s...",</span></div></div>
<div class="jc" style="left:308px;top:689.0px;width:188px;height:51px"><div class="chev"><svg width="6" height="4" viewBox="0 0 6 4"><path d="M0.9 1 L3 3 L5.1 1" fill="none" stroke="#3a3a3a" stroke-width="1.2"/></svg></div><div class="brace">{</div><div class="cnt">3 items</div><div class="guide"></div><div class="ln l1"><span class="k">"min_timestamp_with_offset"</span></div><div class="ln l2"><span class="v">10-21T09:30:00+00:00",</span></div></div>
<div class="jc" style="left:802px;top:689.0px;width:188px;height:51px"><div class="chev"><svg width="6" height="4" viewBox="0 0 6 4"><path d="M0.9 1 L3 3 L5.1 1" fill="none" stroke="#3a3a3a" stroke-width="1.2"/></svg></div><div class="brace">{</div><div class="cnt">3 items</div><div class="guide"></div><div class="ln l1"><span class="k">"min_timestamp_with_offset"</span></div><div class="ln l2"><span class="v">05-01T00:00:00+00:00",</span></div></div>
<div class="lnk" style="left:519px;top:703.5px">case<svg width="10" height="10" viewBox="0 0 10 10"><path d="M4.2 1.6 H2.2 Q1.2 1.6 1.2 2.6 V7.8 Q1.2 8.8 2.2 8.8 H7.4 Q8.4 8.8 8.4 7.8 V5.8" fill="none" stroke="#3b7dd8" stroke-width="1"/><path d="M5.6 1.2 H8.8 V4.4 M8.8 1.2 L4.6 5.4" fill="none" stroke="#3b7dd8" stroke-width="1"/></svg></div>
<div class="asrt" style="left:577px;top:697.0px;width:131px"><svg width="13" height="13" viewBox="0 0 13 13"><circle cx="6.5" cy="6.5" r="5.9" fill="none" stroke="#45b690" stroke-width="1.1"/><path d="M3.9 6.7 L5.7 8.4 L9.1 4.8" fill="none" stroke="#45b690" stroke-width="1.15"/></svg><svg width="13" height="13" viewBox="0 0 13 13"><circle cx="6.5" cy="6.5" r="5.9" fill="none" stroke="#d6504c" stroke-width="1.1"/><path d="M4.6 4.6 L8.4 8.4 M8.4 4.6 L4.6 8.4" fill="none" stroke="#d6504c" stroke-width="1.15"/></svg><svg width="13" height="13" viewBox="0 0 13 13"><circle cx="6.5" cy="6.5" r="5.9" fill="none" stroke="#45b690" stroke-width="1.1"/><path d="M3.9 6.7 L5.7 8.4 L9.1 4.8" fill="none" stroke="#45b690" stroke-width="1.15"/></svg><svg width="13" height="13" viewBox="0 0 13 13"><circle cx="6.5" cy="6.5" r="5.9" fill="none" stroke="#45b690" stroke-width="1.1"/><path d="M3.9 6.7 L5.7 8.4 L9.1 4.8" fill="none" stroke="#45b690" stroke-width="1.15"/></svg><svg width="13" height="13" viewBox="0 0 13 13"><circle cx="6.5" cy="6.5" r="5.9" fill="none" stroke="#d6504c" stroke-width="1.1"/><path d="M4.6 4.6 L8.4 8.4 M8.4 4.6 L4.6 8.4" fill="none" stroke="#d6504c" stroke-width="1.15"/></svg></div>
<div class="frac" style="left:577px;top:718.5px;width:131px">3/5</div>
<div class="num" style="left:708px;top:698.0px;width:90px">3.53ms</div>
<div class="num" style="left:990px;top:698.0px;width:89px">0.924</div>
<div class="num" style="left:1084px;top:698.0px;width:89px">1,004</div>
<div class="num" style="left:1178px;top:698.0px;width:89px">226</div>
<div class="num" style="left:1272px;top:698.0px;width:89px">2</div>
<div class="td" style="left:1371px;top:697.0px">my_value_1</div>
<div class="hl" style="left:14px;top:791px;width:1446px"></div>
<div class="td" style="left:19px;top:748.2px">Single day mention</div>
<div class="jc" style="left:120px;top:740.0px;width:188px;height:51px"><div class="chev"><svg width="6" height="4" viewBox="0 0 6 4"><path d="M0.9 1 L3 3 L5.1 1" fill="none" stroke="#3a3a3a" stroke-width="1.2"/></svg></div><div class="brace">{</div><div class="cnt">2 items</div><div class="guide"></div><div class="ln l1"><span class="k">"prompt": </span><span class="v">"I want to see</span></div><div class="ln l2"><span class="v">logs from 2021-0...",</span></div></div>
<div class="jc" style="left:308px;top:740.0px;width:188px;height:51px"><div class="chev"><svg width="6" height="4" viewBox="0 0 6 4"><path d="M0.9 1 L3 3 L5.1 1" fill="none" stroke="#3a3a3a" stroke-width="1.2"/></svg></div><div class="brace">{</div><div class="cnt">3 items</div><div class="guide"></div><div class="ln l1"><span class="k">"min_timestamp_with_offset"</span></div><div class="ln l2"><span class="v">05-08T00:00:00+00:00",</span></div></div>
<div class="jc" style="left:802px;top:740.0px;width:188px;height:51px"><div class="chev"><svg width="6" height="4" viewBox="0 0 6 4"><path d="M0.9 1 L3 3 L5.1 1" fill="none" stroke="#3a3a3a" stroke-width="1.2"/></svg></div><div class="brace">{</div><div class="cnt">3 items</div><div class="guide"></div><div class="ln l1"><span class="k">"min_timestamp_with_offset"</span></div><div class="ln l2"><span class="v">05-08T00:00:00+00:00",</span></div></div>
<div class="lnk" style="left:519px;top:754.5px">case<svg width="10" height="10" viewBox="0 0 10 10"><path d="M4.2 1.6 H2.2 Q1.2 1.6 1.2 2.6 V7.8 Q1.2 8.8 2.2 8.8 H7.4 Q8.4 8.8 8.4 7.8 V5.8" fill="none" stroke="#3b7dd8" stroke-width="1"/><path d="M5.6 1.2 H8.8 V4.4 M8.8 1.2 L4.6 5.4" fill="none" stroke="#3b7dd8" stroke-width="1"/></svg></div>
<div class="asrt" style="left:577px;top:748.0px;width:131px"><svg width="13" height="13" viewBox="0 0 13 13"><circle cx="6.5" cy="6.5" r="5.9" fill="none" stroke="#45b690" stroke-width="1.1"/><path d="M3.9 6.7 L5.7 8.4 L9.1 4.8" fill="none" stroke="#45b690" stroke-width="1.15"/></svg><svg width="13" height="13" viewBox="0 0 13 13"><circle cx="6.5" cy="6.5" r="5.9" fill="none" stroke="#d6504c" stroke-width="1.1"/><path d="M4.6 4.6 L8.4 8.4 M8.4 4.6 L4.6 8.4" fill="none" stroke="#d6504c" stroke-width="1.15"/></svg><svg width="13" height="13" viewBox="0 0 13 13"><circle cx="6.5" cy="6.5" r="5.9" fill="none" stroke="#45b690" stroke-width="1.1"/><path d="M3.9 6.7 L5.7 8.4 L9.1 4.8" fill="none" stroke="#45b690" stroke-width="1.15"/></svg><svg width="13" height="13" viewBox="0 0 13 13"><circle cx="6.5" cy="6.5" r="5.9" fill="none" stroke="#d6504c" stroke-width="1.1"/><path d="M4.6 4.6 L8.4 8.4 M8.4 4.6 L4.6 8.4" fill="none" stroke="#d6504c" stroke-width="1.15"/></svg></div>
<div class="frac" style="left:577px;top:769.5px;width:131px">2/4</div>
<div class="num" style="left:708px;top:749.0px;width:90px">1.61ms</div>
<div class="num" style="left:990px;top:749.0px;width:89px">0.0988</div>
<div class="num" style="left:1084px;top:749.0px;width:89px">464</div>
<div class="num" style="left:1178px;top:749.0px;width:89px">152</div>
<div class="num" style="left:1272px;top:749.0px;width:89px">1</div>
<div class="td" style="left:1371px;top:748.0px">my_value_0</div>
</body></html>
